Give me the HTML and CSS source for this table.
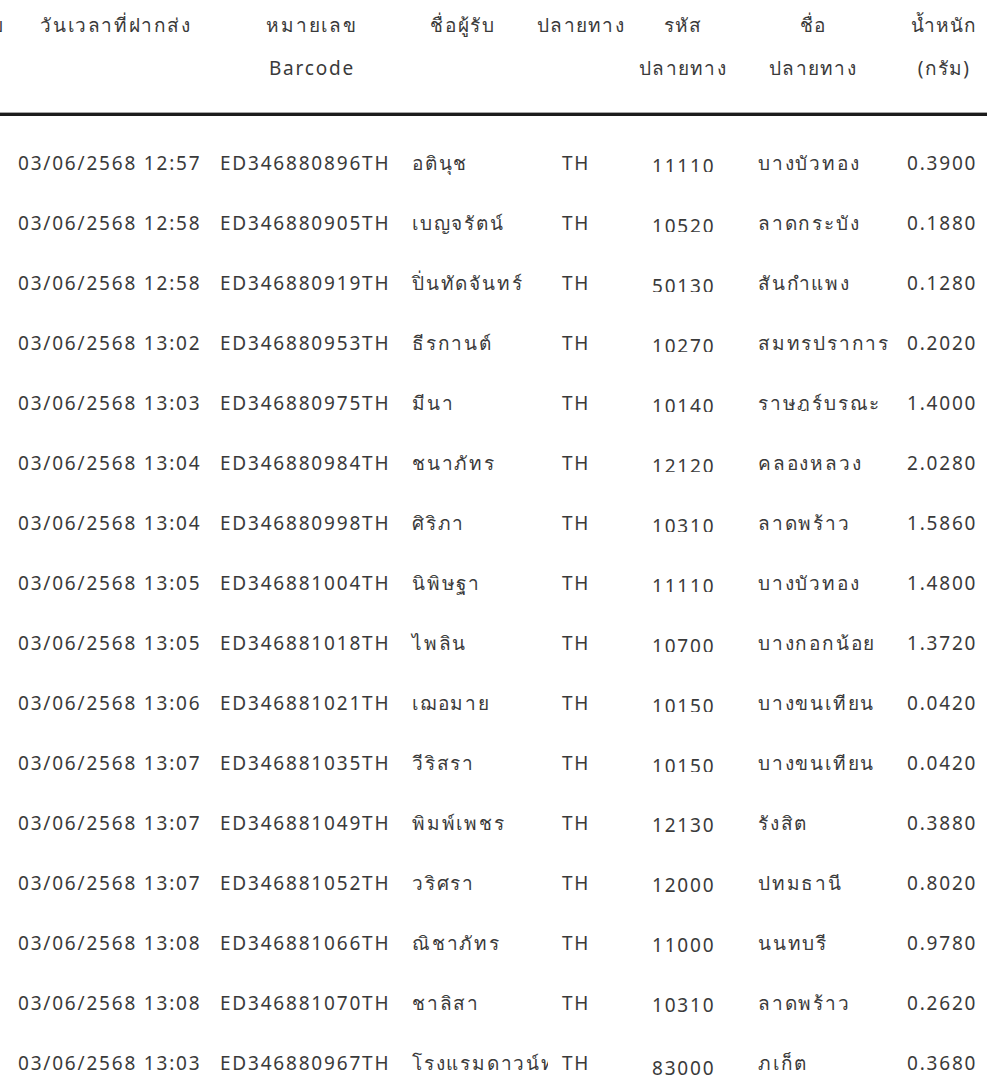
FILE: index.html
```html
<!DOCTYPE html>
<html lang="th">
<head>
<meta charset="utf-8">
<title>รายการฝากส่ง</title>
<link rel="stylesheet" href="styles.css">
</head>
<body>
<table class="grid">
  <colgroup>
    <col class="w0"><col class="w1"><col class="w2"><col class="w3"><col class="w4"><col class="w5"><col class="w6"><col class="w7">
  </colgroup>
  <thead>
    <tr>
      <th class="h0">ลำดับ</th>
      <th class="h1"><span class="hl">วันเวลาที่ฝากส่ง</span></th>
      <th class="h2"><span class="hl">หมายเลข<br>Barcode</span></th>
      <th class="h3"><span class="hl">ชื่อผู้รับ</span></th>
      <th class="h4"><span class="hl">ปลายทาง</span></th>
      <th class="h5"><span class="hl">รหัส<br>ปลายทาง</span></th>
      <th class="h6"><span class="hl">ชื่อ<br>ปลายทาง</span></th>
      <th class="h7"><span class="hl">น้ำหนัก<br>(กรัม)</span></th>
    </tr>
  </thead>
  <tbody>
    <tr><td></td><td class="d1">03/06/2568 12:57</td><td class="d2">ED346880896TH</td><td class="d3">อตินุช</td><td class="d4">TH</td><td class="d5"><span class="pc cut">11110</span></td><td class="d6"><span class="dist">บางบัวทอง</span></td><td class="d7">0.3900</td></tr>
    <tr><td></td><td class="d1">03/06/2568 12:58</td><td class="d2">ED346880905TH</td><td class="d3">เบญจรัตน์</td><td class="d4">TH</td><td class="d5"><span class="pc cut">10520</span></td><td class="d6"><span class="dist">ลาดกระบัง</span></td><td class="d7">0.1880</td></tr>
    <tr><td></td><td class="d1">03/06/2568 12:58</td><td class="d2">ED346880919TH</td><td class="d3">ปิ่นทัดจันทร์</td><td class="d4">TH</td><td class="d5"><span class="pc cut">50130</span></td><td class="d6"><span class="dist">สันกำแพง</span></td><td class="d7">0.1280</td></tr>
    <tr><td></td><td class="d1">03/06/2568 13:02</td><td class="d2">ED346880953TH</td><td class="d3">ธีรกานต์</td><td class="d4">TH</td><td class="d5"><span class="pc cut">10270</span></td><td class="d6"><span class="dist">สมุทรปราการ</span></td><td class="d7">0.2020</td></tr>
    <tr><td></td><td class="d1">03/06/2568 13:03</td><td class="d2">ED346880975TH</td><td class="d3">มีนา</td><td class="d4">TH</td><td class="d5"><span class="pc cut">10140</span></td><td class="d6"><span class="dist">ราษฎร์บูรณะ</span></td><td class="d7">1.4000</td></tr>
    <tr><td></td><td class="d1">03/06/2568 13:04</td><td class="d2">ED346880984TH</td><td class="d3">ชนาภัทร</td><td class="d4">TH</td><td class="d5"><span class="pc cut">12120</span></td><td class="d6"><span class="dist">คลองหลวง</span></td><td class="d7">2.0280</td></tr>
    <tr><td></td><td class="d1">03/06/2568 13:04</td><td class="d2">ED346880998TH</td><td class="d3">ศิริภา</td><td class="d4">TH</td><td class="d5"><span class="pc cut">10310</span></td><td class="d6"><span class="dist">ลาดพร้าว</span></td><td class="d7">1.5860</td></tr>
    <tr><td></td><td class="d1">03/06/2568 13:05</td><td class="d2">ED346881004TH</td><td class="d3">นิพิษฐา</td><td class="d4">TH</td><td class="d5"><span class="pc cut">11110</span></td><td class="d6"><span class="dist">บางบัวทอง</span></td><td class="d7">1.4800</td></tr>
    <tr><td></td><td class="d1">03/06/2568 13:05</td><td class="d2">ED346881018TH</td><td class="d3">ไพลิน</td><td class="d4">TH</td><td class="d5"><span class="pc cut">10700</span></td><td class="d6"><span class="dist">บางกอกน้อย</span></td><td class="d7">1.3720</td></tr>
    <tr><td></td><td class="d1">03/06/2568 13:06</td><td class="d2">ED346881021TH</td><td class="d3">เฌอมาย</td><td class="d4">TH</td><td class="d5"><span class="pc cut">10150</span></td><td class="d6"><span class="dist">บางขุนเทียน</span></td><td class="d7">0.0420</td></tr>
    <tr><td></td><td class="d1">03/06/2568 13:07</td><td class="d2">ED346881035TH</td><td class="d3">วีริสรา</td><td class="d4">TH</td><td class="d5"><span class="pc cut">10150</span></td><td class="d6"><span class="dist">บางขุนเทียน</span></td><td class="d7">0.0420</td></tr>
    <tr><td></td><td class="d1">03/06/2568 13:07</td><td class="d2">ED346881049TH</td><td class="d3">พิมพ์เพชร</td><td class="d4">TH</td><td class="d5"><span class="pc">12130</span></td><td class="d6"><span class="dist">รังสิต</span></td><td class="d7">0.3880</td></tr>
    <tr><td></td><td class="d1">03/06/2568 13:07</td><td class="d2">ED346881052TH</td><td class="d3">วริศรา</td><td class="d4">TH</td><td class="d5"><span class="pc">12000</span></td><td class="d6"><span class="dist">ปทุมธานี</span></td><td class="d7">0.8020</td></tr>
    <tr><td></td><td class="d1">03/06/2568 13:08</td><td class="d2">ED346881066TH</td><td class="d3">ณิชาภัทร</td><td class="d4">TH</td><td class="d5"><span class="pc">11000</span></td><td class="d6"><span class="dist">นนทบุรี</span></td><td class="d7">0.9780</td></tr>
    <tr><td></td><td class="d1">03/06/2568 13:08</td><td class="d2">ED346881070TH</td><td class="d3">ชาลิสา</td><td class="d4">TH</td><td class="d5"><span class="pc">10310</span></td><td class="d6"><span class="dist">ลาดพร้าว</span></td><td class="d7">0.2620</td></tr>
    <tr><td></td><td class="d1">03/06/2568 13:03</td><td class="d2">ED346880967TH</td><td class="d3">โรงแรมดาวน์ทาวน์อินน์</td><td class="d4">TH</td><td class="d5"><span class="pc low">83000</span></td><td class="d6"><span class="dist">ภูเก็ต</span></td><td class="d7">0.3680</td></tr>
  </tbody>
</table>
</body>
</html>
```
FILE: styles.css
```css
html, body {
  margin: 0;
  padding: 0;
  background: #ffffff;
  overflow: hidden;
}

body {
  font-family: "Noto Sans", "Open Sans", sans-serif;
  font-size: 19px;
  letter-spacing: 1.8px;
  color: #3a3a3a;
}

.grid {
  border-collapse: separate;
  border-spacing: 0;
  table-layout: fixed;
  width: 1064px;
  margin-left: -72px;
}

.w0 { width: 80px; }
.w1 { width: 204px; }
.w2 { width: 192px; }
.w3 { width: 144px; }
.w4 { width: 84px; }
.w5 { width: 108px; }
.w6 { width: 162px; }
.w7 { width: 90px; }

th {
  font-weight: normal;
  text-align: center;
  vertical-align: top;
  line-height: 43px;
  padding: 4px 0 23px 0;
  white-space: nowrap;
  border-bottom: 3px solid #1c1c1c;
  box-shadow: inset 0 -1px 0 #a6a6a6;
}

.hl {
  display: inline-block;
  margin: 0 -40px;
}

.h0 { text-align: right; padding-right: 5px; letter-spacing: 0; overflow: hidden; }
.h1 { padding-left: 12px; letter-spacing: 1.6px; }
.h2 { padding-left: 8px; }
.h3 { padding-right: 26px; }
.h4 { padding-right: 18px; letter-spacing: 1.3px; }
.h5 { padding-right: 6px; letter-spacing: 1.3px; }
.h6 { padding-right: 16px; letter-spacing: 1.3px; }
.h7 { padding-right: 6px; letter-spacing: 1.2px; }

td {
  padding: 17px 0;
  line-height: 26px;
  vertical-align: top;
  white-space: nowrap;
  overflow: hidden;
}

tbody tr:first-child td {
  padding-top: 34px;
}

.d1 { padding-left: 10px; }
.d2 { padding-left: 8px; }
.d3 { padding-left: 8px; }
.d4 { padding-left: 14px; }
.d5 { padding-left: 20px; }
.d6 { padding-left: 18px; }
.d7 { padding-left: 5px; }

.pc {
  display: inline-block;
  vertical-align: top;
  box-sizing: border-box;
  height: 26px;
  padding-top: 2px;
}

.pc.cut {
  height: 22px;
  padding-top: 3px;
  overflow: hidden;
}

.pc.low {
  padding-top: 5px;
}

.dist {
  display: inline-block;
  vertical-align: top;
  height: 21px;
  overflow: hidden;
}
```
